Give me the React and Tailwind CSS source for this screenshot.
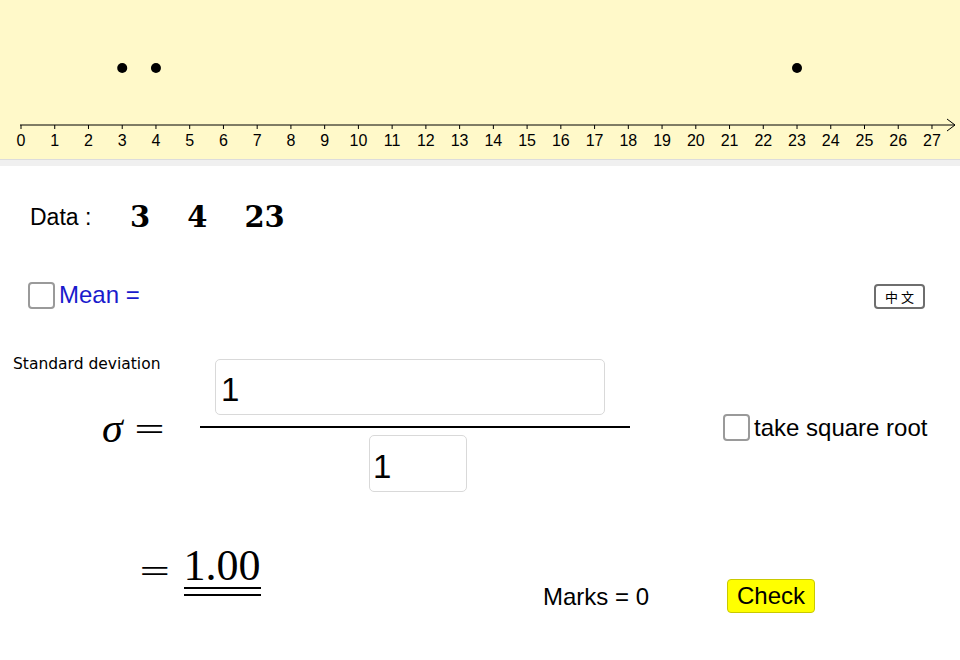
import React from 'react';

// ── Number line data ──────────────────────────────────────────────────
const DATA = [3, 4, 23];
const X0 = 21;
const STEP = 33.74;
const TICKS = Array.from({ length: 28 }, (_, i) => i);

const NumberLine = () => (
  <svg width="960" height="159" viewBox="0 0 960 159" className="block">
    <line x1="20" y1="125" x2="955" y2="125" stroke="#000" strokeWidth="1" />
    <polyline points="947,119 955,125 947,131" fill="none" stroke="#000" strokeWidth="1" />
    {TICKS.map((t) => {
      const x = X0 + t * STEP;
      return (
        <g key={t}>
          <line x1={x} y1="125" x2={x} y2="129" stroke="#000" strokeWidth="1" />
          <text
            x={x}
            y="146"
            textAnchor="middle"
            fontSize="16"
            fontFamily="'Liberation Sans', Arial, sans-serif"
            fill="#000"
          >
            {t}
          </text>
        </g>
      );
    })}
    {DATA.map((d, i) => (
      <circle key={i} cx={X0 + d * STEP} cy="68" r="5" fill="#000" />
    ))}
  </svg>
);

const Checkbox = () => (
  <div className="w-[27px] h-[27px] shrink-0 rounded-[4px] border-2 border-[#9a9a9a] bg-white" />
);

// ── Main component ────────────────────────────────────────────────────
const App = () => {
  return (
    <div className="w-[960px] h-[660px] overflow-hidden bg-white text-black font-['Liberation_Sans',Arial,sans-serif]">
      {/* Graphics view */}
      <div className="h-[159px] bg-[#fff9c9]">
        <NumberLine />
      </div>
      <div className="h-[7px] bg-[#f0f0f0] border-t border-[#dcdcdc]" />

      {/* Data row */}
      <div className="mt-[31px] h-[40px] flex items-center pl-[30px]">
        <span className="text-[23px] w-[100px]">Data :</span>
        <div className="flex gap-[37px] font-['DejaVu_Serif',serif] font-bold text-[29px] leading-none">
          {DATA.map((d) => (
            <span key={d}>{d}</span>
          ))}
        </div>
      </div>

      {/* Mean row */}
      <div className="mt-[44px] h-[28px] flex items-center justify-between pl-[28px] pr-[35px]">
        <div className="flex items-center gap-[4px]">
          <Checkbox />
          <span className="text-[24px] text-[#1a1acc] leading-none">Mean =</span>
        </div>
        <button className="w-[51px] h-[25px] mt-[3px] rounded-[4px] border-2 border-[#6e6e6e] bg-white text-[13px] leading-none text-black font-['Noto_Sans_CJK_TC',serif]">
          中 文
        </button>
      </div>

      {/* Standard deviation */}
      <div className="mt-[46px] flex items-start">
        <div className="w-[200px] flex flex-col">
          <span className="pl-[13px] text-[15.5px] leading-[18px] font-['DejaVu_Sans',sans-serif]">
            Standard deviation
          </span>
          <div className="mt-[35px] pl-[102px] h-[40px] flex items-center gap-[10px]">
            <span className="font-['Liberation_Serif',serif] italic text-[42px] leading-none">σ</span>
            <span className="font-['DejaVu_Sans',sans-serif] text-[40px] leading-none font-extralight">=</span>
          </div>
        </div>

        <div className="w-[430px] pt-[4px] flex flex-col">
          <div className="ml-[15px] w-[390px] h-[56px] rounded-[5px] border-[1.5px] border-[#d9d9d9] flex items-center pl-[5px] pt-[6px] text-[33px]">
            1
          </div>
          <div className="mt-[11px] h-[2px] w-full bg-black" />
          <div className="mt-[7px] ml-[169px] w-[98px] h-[57px] rounded-[5px] border-[1.5px] border-[#d9d9d9] flex items-center pl-[3px] pt-[6px] text-[33px]">
            1
          </div>
        </div>

        <div className="ml-[93px] mt-[59px] flex items-center gap-[4px]">
          <Checkbox />
          <span className="text-[24px] leading-none">take square root</span>
        </div>
      </div>

      {/* Result row */}
      <div className="mt-[52px] flex items-start">
        <div className="w-[543px] pl-[138px] flex items-start gap-[12px]">
          <span className="h-[44px] mt-[4px] flex items-center font-['DejaVu_Sans',sans-serif] text-[40px] leading-none font-extralight">
            =
          </span>
          <div className="flex flex-col">
            <span className="h-[44px] font-['Liberation_Serif',serif] text-[44px] leading-none">1.00</span>
            <div className="-mt-[1px] h-[2px] bg-black" />
            <div className="mt-[5px] h-[2px] bg-black" />
          </div>
        </div>
        <div className="w-[184px] mt-[39px] text-[24px] leading-[28px]">Marks = 0</div>
        <button className="mt-[35px] w-[88px] h-[34px] rounded-[4px] border border-[#c9c900] bg-[#ffff00] text-[24px] leading-none">
          Check
        </button>
      </div>
    </div>
  );
};

export default App;
